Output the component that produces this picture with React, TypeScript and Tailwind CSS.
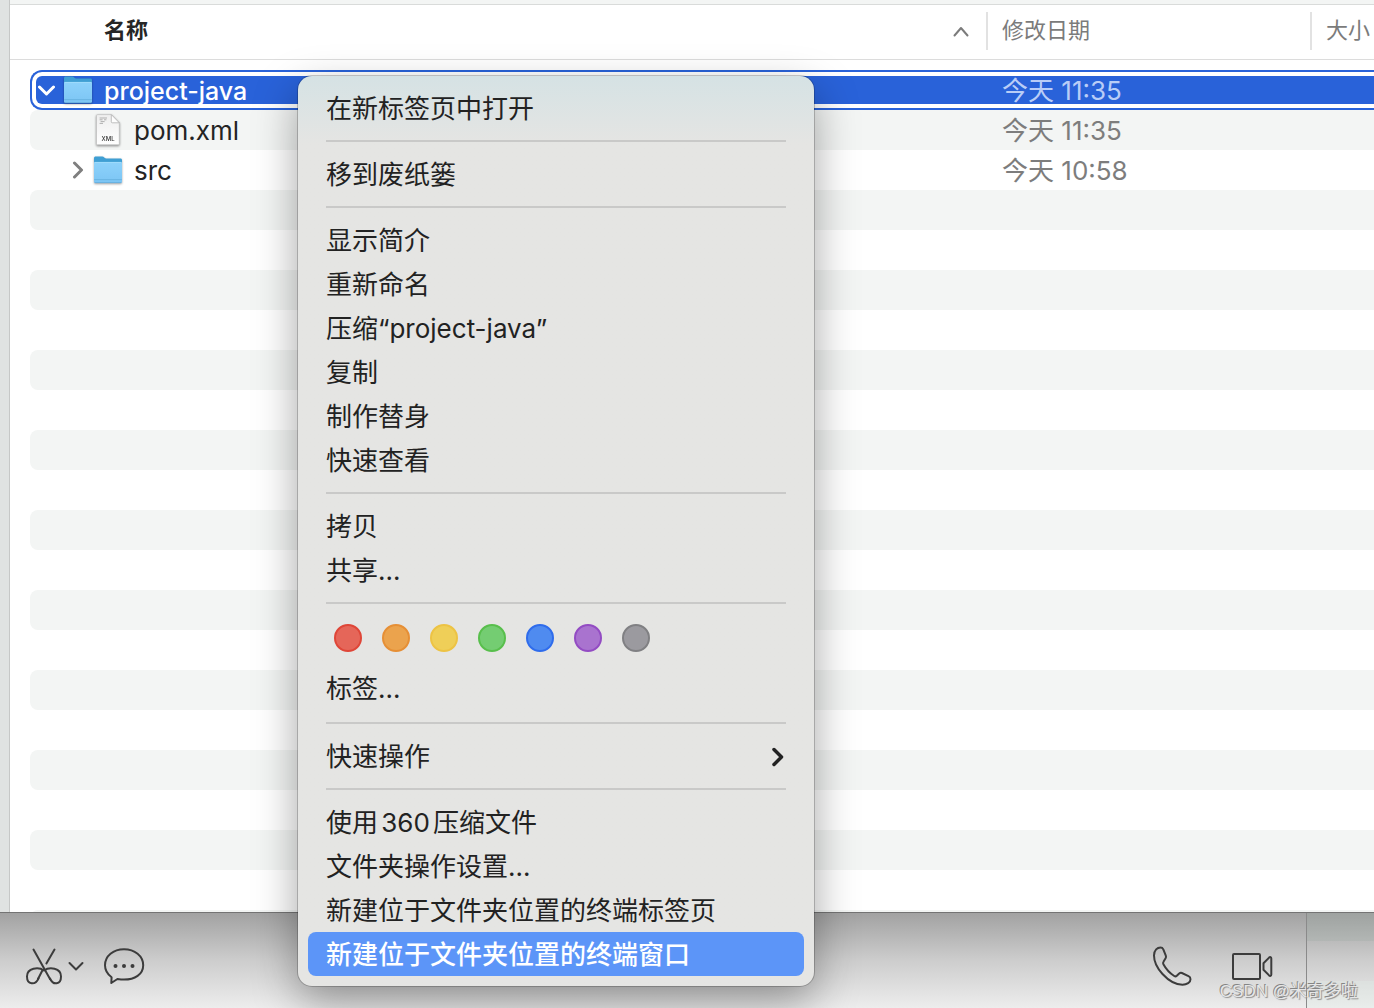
import type { ReactNode } from "react";
import clsx from "clsx";

interface FileRow {
  name: string;
  date: string;
  kind: "folder" | "xml";
  open?: boolean;
  child?: boolean;
  selected?: boolean;
}

const files: FileRow[] = [
  {
    name: "project-java",
    date: "今天 11:35",
    kind: "folder",
    open: true,
    selected: true,
  },
  { name: "pom.xml", date: "今天 11:35", kind: "xml", child: true },
  { name: "src", date: "今天 10:58", kind: "folder", child: true },
];

const emptyRows = Array.from({ length: 19 }, (_, i) => i + files.length);

const menuGroups = [
  ["在新标签页中打开"],
  ["移到废纸篓"],
  [
    "显示简介",
    "重新命名",
    "压缩“project-java”",
    "复制",
    "制作替身",
    "快速查看",
  ],
  ["拷贝", "共享..."],
];

const serviceItems = [
  "使用360压缩文件",
  "文件夹操作设置...",
  "新建位于文件夹位置的终端标签页",
  "新建位于文件夹位置的终端窗口",
];

const tags = [
  { label: "红色", color: "bg-[#e56659] border-[#df4638]" },
  { label: "橙色", color: "bg-[#eba34d] border-[#e68f35]" },
  { label: "黄色", color: "bg-[#efcf58] border-[#edc344]" },
  { label: "绿色", color: "bg-[#74cd72] border-[#58bf4c]" },
  { label: "蓝色", color: "bg-[#4f8bf0] border-[#2f6cec]" },
  { label: "紫色", color: "bg-[#a973cf] border-[#934cc3]" },
  { label: "灰色", color: "bg-[#9b9a9f] border-[#808083]" },
];

function FolderIcon() {
  return (
    <svg
      viewBox="0 0 30 28"
      className="h-7 w-[30px] shrink-0 drop-shadow-[0_1px_1px_rgba(0,0,0,0.35)]"
      aria-hidden="true"
    >
      <defs>
        <linearGradient id="folder-front" x1="0" y1="0" x2="0" y2="1">
          <stop offset="0" stopColor="#8dd2fb" />
          <stop offset="1" stopColor="#7cc5f4" />
        </linearGradient>
      </defs>
      <path
        d="M1 2.400C1 1.200 1.600.6 2.800.6h6.600c1.600 0 2 1.800 3.600 1.800h14.400c1.100 0 1.600.6 1.600 1.600V12H1z"
        fill="#3f9fd4"
      />
      <path
        d="M1 7.200c0-.8.5-1.200 1.400-1.200h25.200c.9 0 1.400.4 1.400 1.200v18.400c0 .9-.5 1.400-1.400 1.400H2.400c-.9 0-1.400-.5-1.400-1.400z"
        fill="url(#folder-front)"
      />
      <path d="M1.600 6.400h26.800" stroke="#a5defd" strokeWidth="0.8" />
      <path d="M1.200 23.600h27.600" stroke="#66b1e0" strokeWidth="0.9" />
      <path d="M1.600 26.700h26.800" stroke="#5ba4d2" strokeWidth="0.7" />
    </svg>
  );
}

function XmlIcon() {
  return (
    <svg
      viewBox="0 0 30 34"
      className="h-[34px] w-[30px] shrink-0 drop-shadow-[0_1px_1px_rgba(0,0,0,0.45)]"
      aria-hidden="true"
    >
      <defs>
        <linearGradient id="paper" x1="0" y1="0" x2="0" y2="1">
          <stop offset="0" stopColor="#eeeeee" />
          <stop offset="1" stopColor="#ffffff" />
        </linearGradient>
      </defs>
      <path
        d="M4.500 1.600h13.800l8 8.200v21c0 .6-.4 1-1 1h-20.800c-.6 0-1-.4-1-1V2.600c0-.6.4-1 1-1z"
        fill="url(#paper)"
        stroke="#c0c0c0"
        strokeWidth="0.7"
      />
      <path
        d="M6.600 5h7.400M6.600 6.800h3M11 6.800h2.400M7.600 8.600h4M6.600 10.400h3.400"
        stroke="#a8a8a8"
        strokeWidth="0.9"
      />
      <path
        d="M18.300 1.600v7.200c0 .7.4 1 1 1h7z"
        fill="#fdfdfd"
        stroke="#b0b0b0"
        strokeWidth="0.8"
      />
      <text
        x="15"
        y="28"
        textAnchor="middle"
        fontSize="6"
        fontWeight="500"
        fill="#333"
      >
        XML
      </text>
    </svg>
  );
}

function Disclosure({ open }: { open?: boolean }) {
  return (
    <svg
      viewBox="0 0 18 18"
      className={clsx(
        "size-[18px] fill-none stroke-[3]",
        open ? "stroke-white" : "stroke-[#7f7f7f]",
      )}
      strokeLinecap="round"
      strokeLinejoin="round"
      aria-hidden="true"
    >
      <path d={open ? "M1.500 6l7 7 7-7" : "M6.500 2l7 7-7 7"} />
    </svg>
  );
}

function NameCell({ file }: { file: FileRow }) {
  return (
    <div className={clsx("flex h-full items-center", file.child && "pl-9")}>
      <span className="flex w-[27px] shrink-0 pl-0.5">
        {file.kind === "folder" && (
          <button
            type="button"
            aria-label={file.open ? "折叠" : "展开"}
            className="flex"
          >
            <Disclosure open={file.open} />
          </button>
        )}
      </span>
      {file.kind === "folder" ? <FolderIcon /> : <XmlIcon />}
      <span className="ml-[11px] pt-0.5 leading-7">{file.name}</span>
    </div>
  );
}

function FileTable() {
  return (
    <table className="w-full table-fixed border-separate border-spacing-0 text-left">
      <colgroup>
        <col />
        <col className="w-[324px]" />
        <col className="w-[62px]" />
      </colgroup>
      <thead>
        <tr className="h-[55px] text-[22px] leading-8 text-[#7b7b7b]">
          <th className="border-b border-[#dcdcdc] p-0 pb-0.5 font-bold text-[#262626]">
            <div className="flex h-[38px] items-center justify-between border-r-2 border-[#e2e2e2] pr-4 pl-[94px]">
              <span className="pb-0.5">名称</span>
              <svg
                viewBox="0 0 18 12"
                className="h-3 w-[18px] fill-none stroke-[#7b7b7b] stroke-2"
                strokeLinecap="round"
                strokeLinejoin="round"
                aria-hidden="true"
              >
                <path d="M2.500 10.500L9 3l6.500 7.500" />
              </svg>
            </div>
          </th>
          <th className="border-b border-[#dcdcdc] p-0 pb-0.5 font-normal">
            <div className="flex h-[38px] items-center border-r-2 border-[#e2e2e2] pl-3.5">
              <span className="pb-0.5">修改日期</span>
            </div>
          </th>
          <th className="border-b border-[#dcdcdc] p-0 pb-0.5 font-normal whitespace-nowrap">
            <div className="flex h-[38px] items-center pl-3.5">
              <span className="pb-0.5">大小</span>
            </div>
          </th>
        </tr>
      </thead>
      <tbody className="text-[26px] whitespace-nowrap text-[#242424]">
        <tr className="h-2.5">
          <td colSpan={3} className="p-0" />
        </tr>
        {files.map((file, i) =>
          file.selected ? (
            <tr key={file.name} className="h-10 text-white">
              <td className="p-0 pl-5 text-[25px] font-medium">
                <div className="h-10 rounded-l-xl border-y-2 border-l-2 border-[#2962d9] py-1 pl-1">
                  <div className="h-7 rounded-l-md bg-[#2962d9]">
                    <NameCell file={file} />
                  </div>
                </div>
              </td>
              <td colSpan={2} className="p-0 text-[#b9cdf7]">
                <div className="h-10 border-y-2 border-[#2962d9] py-1">
                  <div className="h-7 bg-[#2962d9] pt-px pl-3.5 leading-7">
                    {file.date}
                  </div>
                </div>
              </td>
            </tr>
          ) : (
            <tr key={file.name} className="h-10">
              <td className="p-0 pl-5">
                <div
                  className={clsx(
                    "h-10 rounded-l-lg",
                    i % 2 === 1 && "bg-[#f3f5f4]",
                  )}
                >
                  <NameCell file={file} />
                </div>
              </td>
              <td colSpan={2} className="p-0 text-[#7d7d7d]">
                <div
                  className={clsx(
                    "h-10 pt-px pl-3.5 leading-10",
                    i % 2 === 1 && "bg-[#f3f5f4]",
                  )}
                >
                  {file.date}
                </div>
              </td>
            </tr>
          ),
        )}
        {emptyRows.map((i) => (
          <tr key={i} className="h-10">
            <td colSpan={3} className="p-0 pl-5">
              <div
                className={clsx(
                  "h-10 rounded-l-lg",
                  i % 2 === 1 && "bg-[#f3f5f4]",
                )}
              />
            </td>
          </tr>
        ))}
      </tbody>
    </table>
  );
}

function MenuItem({
  children,
  active,
}: {
  children: ReactNode;
  active?: boolean;
}) {
  return (
    <button
      type="button"
      role="menuitem"
      className={clsx(
        "flex h-11 w-full items-center justify-between rounded-lg pt-0.5 pr-5 pl-[18px] text-left whitespace-nowrap",
        active && "bg-[#5c95f8] font-medium text-white",
      )}
    >
      {children}
    </button>
  );
}

function Separator() {
  return (
    <div role="separator" className="mx-[18px] my-2.5 h-0.5 bg-[#c9c9c8]" />
  );
}

function ContextMenu() {
  return (
    <div
      role="menu"
      className="absolute top-[76px] left-[298px] w-[516px] rounded-[14px] bg-[#e5e5e3] bg-linear-to-b from-[#d5e2e4] to-[#e5e5e3] to-[68px] p-2.5 text-[26px] leading-8 text-[#222] shadow-[0_0_0_1px_rgba(0,0,0,0.2),0_16px_44px_rgba(0,0,0,0.36)] [text-autospace:normal]"
    >
      {menuGroups.map((group) => (
        <div key={group[0]}>
          {group.map((item) => (
            <MenuItem key={item}>{item}</MenuItem>
          ))}
          <Separator />
        </div>
      ))}

      {/* Tags */}
      <div className="pb-0.5">
        <div className="flex gap-5 px-[26px] pt-2.5 pb-3.5">
          {tags.map((tag) => (
            <button
              key={tag.label}
              type="button"
              aria-label={tag.label}
              className={clsx("size-7 rounded-full border-2", tag.color)}
            />
          ))}
        </div>
        <MenuItem>标签...</MenuItem>
      </div>
      <Separator />

      <MenuItem>
        快速操作
        <svg
          viewBox="0 0 14 22"
          className="h-[22px] w-3.5 fill-none stroke-[#222] stroke-[3.5]"
          strokeLinecap="round"
          strokeLinejoin="round"
          aria-hidden="true"
        >
          <path d="M4 3.500L11.500 11 4 18.500" />
        </svg>
      </MenuItem>
      <Separator />

      {serviceItems.map((item, i) => (
        <MenuItem key={item} active={i === serviceItems.length - 1}>
          {item}
        </MenuItem>
      ))}
    </div>
  );
}

const toolIcon = "fill-none stroke-[#3c3c3c] stroke-2";

function ChatBar() {
  return (
    <footer className="flex h-24 shrink-0 border-t border-[#747474] bg-linear-to-b from-[#a2a2a2] via-[#cdcdcd] to-[#ededed]">
      <div className="flex flex-1 items-start justify-between border-r border-[#8a8a8a] pt-[33px] pr-8 pl-6">
        <div className="flex items-start">
          <button type="button" aria-label="截图" className="flex items-center">
            <svg
              viewBox="0 0 40 40"
              className={clsx("size-10", toolIcon)}
              strokeLinecap="round"
            >
              <path d="M9.500 3.500L26 33M30.500 3.500L22.400 17.500M18.600 24L14 33" />
              <path d="M20 24.500C14.500 20.500 3 21.800 3 30.500c0 8.500 8.500 9 11.500 1.800M20 24.500C25.500 20.500 37 21.800 37 30.500c0 8.500-8 9-11 2" />
            </svg>
            <svg
              viewBox="0 0 16 10"
              className={clsx("ml-1 h-2.5 w-4", toolIcon)}
              strokeLinecap="round"
              strokeLinejoin="round"
            >
              <path d="M1.500 2L8 8.500 14.500 2" />
            </svg>
          </button>
          <button type="button" aria-label="聊天记录" className="ml-[18px]">
            <svg
              viewBox="0 0 44 40"
              className={clsx("h-10 w-11", toolIcon)}
              strokeLinejoin="round"
            >
              <path d="M9.600 31.200C5.500 28.200 3 24 3 19.200 3 10 11.300 3.200 22 3.200s19.200 6.800 19.200 16S32.700 33.600 22 33.600c-2.400 0-4.600-.3-6.600-.6L9.300 37z" />
              <g className="fill-[#3c3c3c] stroke-none">
                <circle cx="13.500" cy="20" r="2" />
                <circle cx="22" cy="20" r="2" />
                <circle cx="30.500" cy="20" r="2" />
              </g>
            </svg>
          </button>
        </div>
        <div className="flex items-start gap-9">
          <button type="button" aria-label="语音通话">
            <svg
              viewBox="0 2 44 44"
              className={clsx("size-11", toolIcon)}
              strokeLinejoin="round"
            >
              <path d="M10.500 3.400C7.500 3.400 4 6 4 11.500c0 6 3 12.500 8.500 18.500 6 6.500 13.500 10.700 20 10.700 4.500 0 8-2.500 8-5.500 0-1.400-.7-2.400-2-3l-6.600-3.200c-1-.5-1.800-.3-2.700.5l-2.400 2.300c-.9.8-1.600.8-2.600.2-4.200-2.600-8-6.600-10.800-11.700-.6-1.100-.5-1.800.2-2.800l2-3.200c.6-1 .6-1.700.2-2.700L13.300 5.300c-.6-1.300-1.500-1.900-2.800-1.900z" />
            </svg>
          </button>
          <button type="button" aria-label="视频通话">
            <svg
              viewBox="0 -4 44 40"
              className={clsx("h-10 w-11", toolIcon)}
              strokeLinejoin="round"
            >
              <rect x="3" y="4" width="27" height="25" rx="1" />
              <path d="M33.500 13.200l5.600-5.600c1-.9 2.200-.5 2.200.8v16.200c0 1.300-1.200 1.700-2.200.8l-5.600-5.600z" />
            </svg>
          </button>
        </div>
      </div>
      <div className="flex w-[67px] flex-col">
        <div className="h-7 bg-[#8fa39b]/20" />
        <div className="h-10" />
        <div className="flex-1 bg-[#e0f0e8]/30" />
      </div>
    </footer>
  );
}

export default function App() {
  return (
    <div className="relative flex h-screen flex-col overflow-hidden bg-[#e0e3e2] font-[Inter,'Noto_Sans_CJK_SC',sans-serif]">
      <main className="ml-[9px] min-h-0 flex-1 overflow-hidden border-l border-[#c6c8c7] bg-white">
        <div className="h-[5px] border-b border-[#d9dbda] bg-[#f3f5f4]" />
        <FileTable />
      </main>
      <ChatBar />
      <ContextMenu />
      <p className="absolute right-4 bottom-1 font-['Liberation_Sans','Noto_Sans_CJK_SC',sans-serif] text-[17px] leading-6 whitespace-nowrap text-[#e6e6e6] [text-shadow:-1px_-1px_0_#858585,1px_1px_1px_#8f8f8f]">
        CSDN @米奇多啦
      </p>
    </div>
  );
}
